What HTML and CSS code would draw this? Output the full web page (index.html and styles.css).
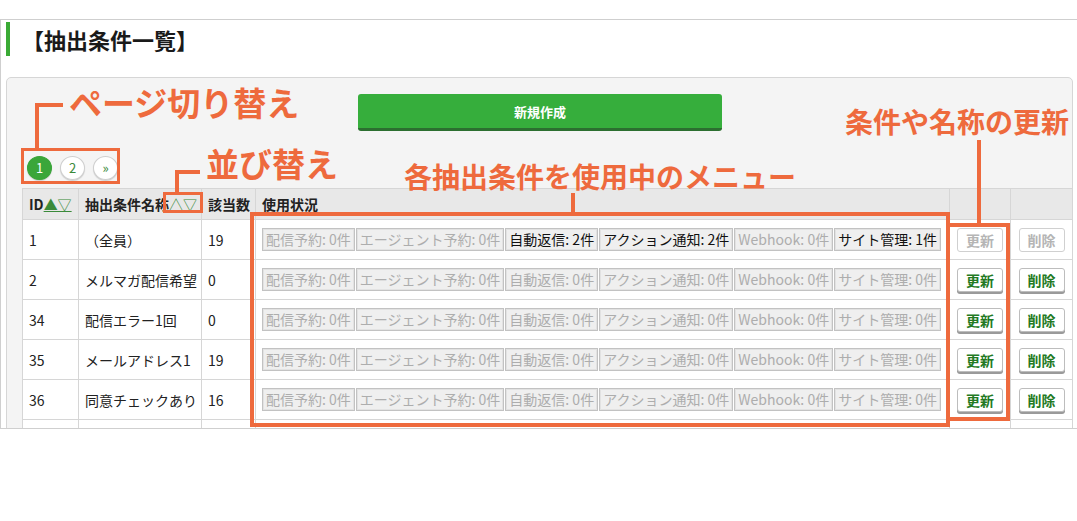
FILE: index.html
```html
<!DOCTYPE html>
<html lang="ja">
<head>
  <meta charset="UTF-8">
  <title>抽出条件一覧</title>
  <link rel="stylesheet" href="styles.css">
</head>
<body>
  <div class="page">
    <h1 class="title">【抽出条件一覧】</h1>

    <div class="panel">
      <button class="btn-new">新規作成</button>

      <div class="pager">
        <span class="pg current">1</span>
        <span class="pg">2</span>
        <span class="pg">&raquo;</span>
      </div>

      <table class="list">
        <colgroup>
          <col class="c-id">
          <col class="c-name">
          <col class="c-count">
          <col class="c-usage">
          <col class="c-edit">
          <col class="c-del">
        </colgroup>
        <thead>
          <tr>
            <th>ID<a class="sort">▲▽</a></th>
            <th>抽出条件名称<a class="sort">△▽</a></th>
            <th>該当数</th>
            <th>使用状況</th>
            <th></th>
            <th></th>
          </tr>
        </thead>
        <tbody>
          <tr>
            <td>1</td>
            <td>（全員）</td>
            <td>19</td>
            <td>
              <div class="usage">
                <span class="tag">配信予約: 0件</span>
                <span class="tag">エージェント予約: 0件</span>
                <span class="tag on">自動返信: 2件</span>
                <span class="tag on">アクション通知: 2件</span>
                <span class="tag">Webhook: 0件</span>
                <span class="tag on">サイト管理: 1件</span>
              </div>
            </td>
            <td class="act"><button class="btn-sm off">更新</button></td>
            <td class="act"><button class="btn-sm off">削除</button></td>
          </tr>
          <tr>
            <td>2</td>
            <td>メルマガ配信希望</td>
            <td>0</td>
            <td>
              <div class="usage">
                <span class="tag">配信予約: 0件</span>
                <span class="tag">エージェント予約: 0件</span>
                <span class="tag">自動返信: 0件</span>
                <span class="tag">アクション通知: 0件</span>
                <span class="tag">Webhook: 0件</span>
                <span class="tag">サイト管理: 0件</span>
              </div>
            </td>
            <td class="act"><button class="btn-sm">更新</button></td>
            <td class="act"><button class="btn-sm">削除</button></td>
          </tr>
          <tr>
            <td>34</td>
            <td>配信エラー1回</td>
            <td>0</td>
            <td>
              <div class="usage">
                <span class="tag">配信予約: 0件</span>
                <span class="tag">エージェント予約: 0件</span>
                <span class="tag">自動返信: 0件</span>
                <span class="tag">アクション通知: 0件</span>
                <span class="tag">Webhook: 0件</span>
                <span class="tag">サイト管理: 0件</span>
              </div>
            </td>
            <td class="act"><button class="btn-sm">更新</button></td>
            <td class="act"><button class="btn-sm">削除</button></td>
          </tr>
          <tr>
            <td>35</td>
            <td>メールアドレス1</td>
            <td>19</td>
            <td>
              <div class="usage">
                <span class="tag">配信予約: 0件</span>
                <span class="tag">エージェント予約: 0件</span>
                <span class="tag">自動返信: 0件</span>
                <span class="tag">アクション通知: 0件</span>
                <span class="tag">Webhook: 0件</span>
                <span class="tag">サイト管理: 0件</span>
              </div>
            </td>
            <td class="act"><button class="btn-sm">更新</button></td>
            <td class="act"><button class="btn-sm">削除</button></td>
          </tr>
          <tr>
            <td>36</td>
            <td>同意チェックあり</td>
            <td>16</td>
            <td>
              <div class="usage">
                <span class="tag">配信予約: 0件</span>
                <span class="tag">エージェント予約: 0件</span>
                <span class="tag">自動返信: 0件</span>
                <span class="tag">アクション通知: 0件</span>
                <span class="tag">Webhook: 0件</span>
                <span class="tag">サイト管理: 0件</span>
              </div>
            </td>
            <td class="act"><button class="btn-sm">更新</button></td>
            <td class="act"><button class="btn-sm">削除</button></td>
          </tr>
          <tr>
            <td></td>
            <td></td>
            <td></td>
            <td></td>
            <td></td>
            <td></td>
          </tr>
        </tbody>
      </table>
    </div>
  </div>

  <!-- annotations drawn over the screenshot -->
  <div class="note n-page">ページ切り替え</div>
  <div class="bracket b-page"></div>
  <div class="mark m-page"></div>

  <div class="note n-sort">並び替え</div>
  <div class="bracket b-sort"></div>
  <div class="mark m-sort"></div>

  <div class="note n-usage">各抽出条件を使用中のメニュー</div>
  <div class="stem s-usage"></div>
  <div class="mark m-usage"></div>

  <div class="note n-edit">条件や名称の更新</div>
  <div class="stem s-edit"></div>
  <div class="mark m-edit"></div>
</body>
</html>
```

FILE: styles.css
```css
body {
  margin: 0;
  padding-top: 19px;
  background: #fff;
  color: #222;
  font-family: "Noto Sans CJK JP", "Noto Sans", sans-serif;
}

.page {
  height: 406px;
  overflow: hidden;
  padding: 2px 4px 0 5px;
  border-top: 1px solid #cfcfcf;
  border-left: 1px solid #cfcfcf;
  border-bottom: 1px solid #cfcfcf;
}

.title {
  margin: 0 0 21px 0;
  height: 34px;
  line-height: 34px;
  padding-left: 12px;
  border-left: 4px solid #3aaa35;
  font-size: 22px;
  font-weight: bold;
  color: #1a1a1a;
}

.panel {
  background: #f4f4f4;
  border: 1px solid #d6d6d6;
  border-radius: 5px;
  padding: 16px 0 0 15px;
}

.btn-new {
  display: block;
  width: 364px;
  height: 37px;
  margin: 0 0 0 336px;
  background: #36ae3c;
  border: none;
  border-bottom: 3px solid #2c6f30;
  border-radius: 3px;
  color: #fff;
  font-family: inherit;
  font-size: 13px;
  font-weight: bold;
}

.pager {
  display: flex;
  gap: 8px;
  margin: 25px 0 8px 5px;
}
.pg {
  width: 25px;
  height: 24px;
  box-sizing: border-box;
  border-radius: 50%;
  border: 1px solid #cfcfcf;
  background: #fff;
  box-shadow: 0 1px 1px rgba(0, 0, 0, 0.15);
  color: #3a8a3a;
  font-size: 13px;
  line-height: 22px;
  text-align: center;
}
.pg.current {
  background: #3aa63a;
  border-color: #3aa63a;
  color: #fff;
}

.list {
  width: 1050px;
  table-layout: fixed;
  border-collapse: collapse;
  font-size: 14px;
}
.c-id { width: 56px; }
.c-name { width: 123px; }
.c-count { width: 54px; }
.c-usage { width: 694px; }
.c-edit { width: 61px; }
.c-del { width: 62px; }

.list th, .list td {
  border: 1px solid #d6d6d6;
  padding: 0 6px;
  text-align: left;
  white-space: nowrap;
  overflow: hidden;
}
.list th {
  height: 30px;
  background: #e8e8e8;
  font-weight: bold;
}
.list td {
  height: 39px;
  background: #fff;
}
.sort {
  color: #3a8a3a;
  text-decoration: underline;
  font-weight: normal;
}

.usage {
  display: flex;
  gap: 1px;
}
.tag {
  height: 23px;
  box-sizing: border-box;
  padding: 0 3px;
  background: #efefef;
  border: 1px solid #c2c2c2;
  box-shadow: inset 0 0 0 1px #e2e2e2;
  color: #adadad;
  font-size: 14px;
  line-height: 21px;
}
.tag.on {
  color: #111;
}

.act {
  text-align: center !important;
}
.btn-sm {
  width: 46px;
  height: 24px;
  padding: 0;
  background: #fff;
  border: 1px solid #bdbdbd;
  border-radius: 3px;
  box-shadow: 0 2px 0 #9a9a9a;
  color: #237a23;
  font-family: inherit;
  font-size: 14px;
  font-weight: bold;
}
.btn-sm.off {
  color: #b5b5b5;
  border-color: #d0d0d0;
  box-shadow: none;
}

/* orange annotations */
.note {
  position: absolute;
  color: #ee6a3d;
  font-weight: bold;
  line-height: 1;
  white-space: nowrap;
}
.n-page { left: 69px; top: 86px; font-size: 33px; }
.n-sort { left: 206px; top: 147px; font-size: 33px; }
.n-usage { left: 404px; top: 162px; font-size: 28px; }
.n-edit { left: 845px; top: 107px; font-size: 28px; }

.bracket {
  position: absolute;
  box-sizing: border-box;
  border-top: 4px solid #ee6a3d;
  border-left: 4px solid #ee6a3d;
}
.b-page { left: 35px; top: 103px; width: 28px; height: 46px; }
.b-sort { left: 175px; top: 170px; width: 25px; height: 23px; }

.stem {
  position: absolute;
  width: 4px;
  background: #ee6a3d;
}
.s-usage { left: 571px; top: 193px; height: 20px; }
.s-edit { left: 977px; top: 140px; height: 84px; }

.mark {
  position: absolute;
  box-sizing: border-box;
  border: 4px solid #ee6a3d;
}
.m-page { left: 21px; top: 148px; width: 99px; height: 36px; border-width: 3px; }
.m-sort { left: 163px; top: 192px; width: 40px; height: 21px; border-width: 3px; }
.m-usage { left: 250px; top: 212px; width: 700px; height: 215px; }
.m-edit { left: 946px; top: 223px; width: 64px; height: 198px; }
```
